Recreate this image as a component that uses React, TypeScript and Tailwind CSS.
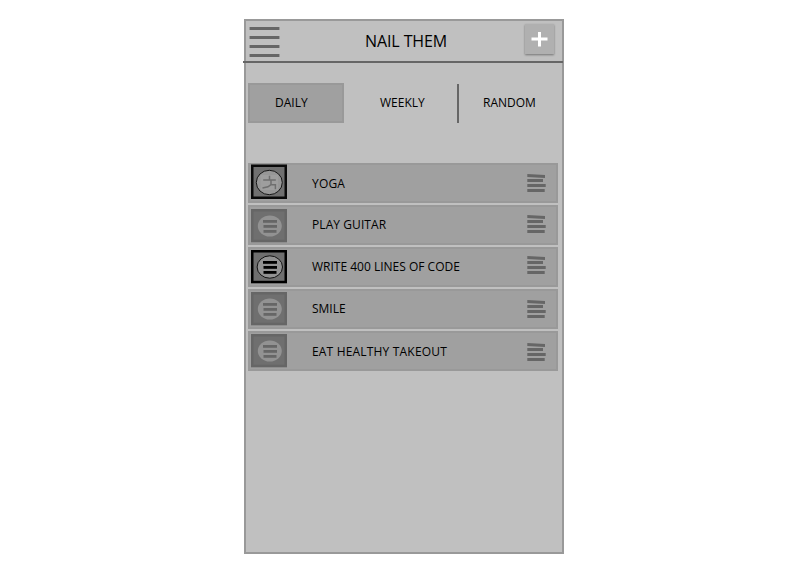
import React from "react";

type TileKind = "yoga" | "dim" | "strong";

type Task = {
  label: string;
  tile: TileKind;
  labelStyle: string;
  tilePad: string;
  gripPad: string;
};

const tasks: Task[] = [
  { label: "YOGA", tile: "yoga", labelStyle: "pt-3 tracking-[0.2px]", tilePad: "pt-px", gripPad: "pt-[11px]" },
  { label: "PLAY GUITAR", tile: "dim", labelStyle: "pt-[11px] tracking-[0.08px]", tilePad: "pt-1", gripPad: "pt-[10px]" },
  { label: "WRITE 400 LINES OF CODE", tile: "strong", labelStyle: "pt-[11px]", tilePad: "pt-[3px]", gripPad: "pt-[9px]" },
  { label: "SMILE", tile: "dim", labelStyle: "pt-[11px]", tilePad: "pt-[3px]", gripPad: "pt-[11px]" },
  { label: "EAT HEALTHY TAKEOUT", tile: "dim", labelStyle: "pt-3 tracking-[0.18px]", tilePad: "pt-[3px]", gripPad: "pt-3" },
];

function Tile({ kind }: { kind: TileKind }) {
  if (kind === "yoga") {
    return (
      <svg width="36" height="36" viewBox="0 0 36 36" className="block">
        <rect x="1.25" y="1.75" width="33.5" height="32" fill="#707070" stroke="#0a0a0a" strokeWidth="2.5" />
        <ellipse cx="18.3" cy="18.5" rx="13" ry="12.2" fill="#979797" stroke="#161616" strokeWidth="1" />
        <rect x="9.5" y="11" width="17.5" height="15" fill="#9e9e9e" />
        <g fill="none" stroke="#6f6f6f" strokeWidth="1.5">
          <path d="M18.5 11.8v3.4M12.2 16h12.6M20 16v4.8h4.4v4.4M20 20.6l-3 2.2-5.5 1.1" />
        </g>
      </svg>
    );
  }
  const strong = kind === "strong";
  const bar = strong ? "#000" : "#666";
  return (
    <svg width="36" height="34" viewBox="0 0 36 34" className="block">
      <rect x="1.25" y="1.25" width="33.5" height="30.8" fill="#6f6f6f" stroke={strong ? "#000" : "#666"} strokeWidth="2.5" />
      <ellipse
        cx="18.8"
        cy="17"
        rx={strong ? 12.7 : 12}
        ry={strong ? 11.2 : 10.6}
        fill="#929292"
        stroke={strong ? "#111" : "none"}
        strokeWidth="1"
      />
      <g fill={bar}>
        <rect x="12" y="11" width="14" height="2.8" />
        <rect x="12.5" y="16" width="13.5" height="2.8" />
        <rect x="12.5" y="21" width="13" height="2.8" />
      </g>
    </svg>
  );
}

function Grip() {
  return (
    <svg width="20" height="19" viewBox="0 0 20 19" className="block" fill="#666">
      <path d="M0.3 0L18 1V4L0.3 3z" />
      <rect x="0.3" y="5" width="15.7" height="3" />
      <rect x="0.3" y="10" width="18.4" height="3" />
      <rect x="0.3" y="15" width="17.4" height="3" />
    </svg>
  );
}

function Row({ task }: { task: Task }) {
  return (
    <li className="flex h-10 border-2 border-[#999] bg-[#a0a0a0]">
      <div className="-mt-0.5 w-[62px] pl-px">
        <div className={task.tilePad}>
          <Tile kind={task.tile} />
        </div>
      </div>
      <div className={`-mt-0.5 grow text-xs leading-[18px] ${task.labelStyle}`}>{task.label}</div>
      <div className={`-mt-0.5 w-[29px] ${task.gripPad}`}>
        <Grip />
      </div>
    </li>
  );
}

export default function App() {
  return (
    <div className="h-[573px] w-[800px] overflow-hidden bg-white pl-[244px] pt-[19px] text-black font-['Open_Sans',sans-serif]">
      <main className="h-[535px] w-80 border-2 border-[#999] bg-[#c0c0c0]">
        <header className="-ml-[3px] flex h-[42px] w-80 border-b-2 border-[#666]">
          <button aria-label="Menu" className="flex w-[122px] flex-col gap-1.5 pl-1.5 pt-1.5">
            <span className="h-[3px] w-[31px] border-x border-[#999] bg-[#666]" />
            <span className="h-[3px] w-[31px] border-x border-[#999] bg-[#666]" />
            <span className="h-[3px] w-[31px] border-x border-[#999] bg-[#666]" />
            <span className="h-[3px] w-[31px] border-x border-[#999] bg-[#666]" />
          </button>
          <h1 className="w-[160px] pt-2 text-base leading-6 tracking-[-0.1px]">NAIL THEM</h1>
          <button
            aria-label="Add"
            className="mt-[3px] flex h-[30px] w-[29px] items-center justify-center bg-[#b0b0b0] shadow-[0_1px_2px_rgba(0,0,0,0.4)]"
          >
            <svg width="17" height="16" viewBox="0 0 17 16" fill="#fff">
              <path d="M7 1h3v5.5h6.5v3H10V15.5H7v-6H0.5v-3H7z" />
            </svg>
          </button>
        </header>
        <nav className="mt-5 flex h-10 pl-0.5 text-xs leading-[18px]">
          <button className="flex w-24 border-2 border-[#999] bg-[#a0a0a0] pl-[25px] pt-[9px]">DAILY</button>
          <button className="mt-px flex w-[115px] border-r-2 border-[#666] pl-9 pt-2.5">WEEKLY</button>
          <button className="flex pl-6 pt-[11px]">RANDOM</button>
        </nav>
        <ul className="ml-0.5 mt-10 flex w-[310px] flex-col gap-0.5">
          {tasks.map((task) => (
            <Row key={task.label} task={task} />
          ))}
        </ul>
      </main>
    </div>
  );
}
